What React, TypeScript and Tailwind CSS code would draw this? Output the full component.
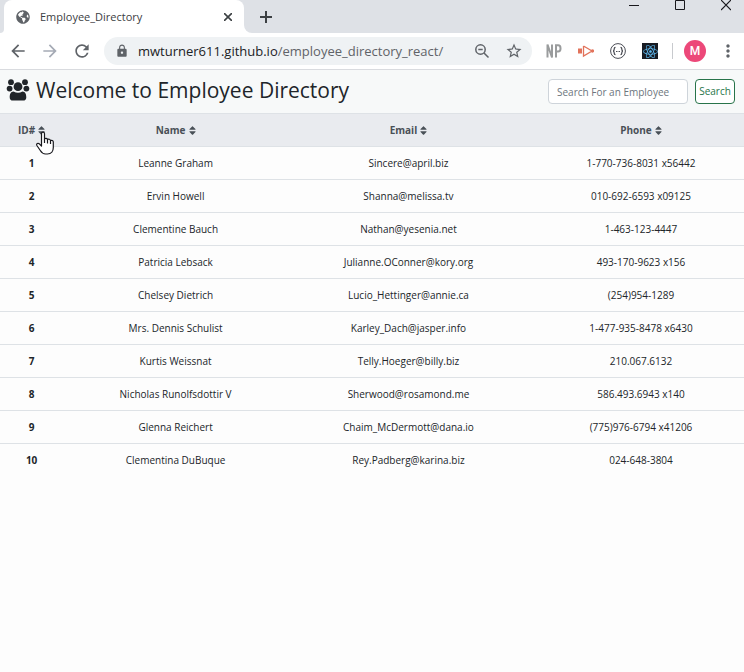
import { FaSort, FaReact, FaGlobeAmericas } from "react-icons/fa";
import { MdLock, MdStarBorder, MdRefresh, MdArrowBack, MdArrowForward, MdMoreVert } from "react-icons/md";

const employees = [
  ["Leanne Graham", "Sincere@april.biz", "1-770-736-8031 x56442"],
  ["Ervin Howell", "Shanna@melissa.tv", "010-692-6593 x09125"],
  ["Clementine Bauch", "Nathan@yesenia.net", "1-463-123-4447"],
  ["Patricia Lebsack", "Julianne.OConner@kory.org", "493-170-9623 x156"],
  ["Chelsey Dietrich", "Lucio_Hettinger@annie.ca", "(254)954-1289"],
  ["Mrs. Dennis Schulist", "Karley_Dach@jasper.info", "1-477-935-8478 x6430"],
  ["Kurtis Weissnat", "Telly.Hoeger@billy.biz", "210.067.6132"],
  ["Nicholas Runolfsdottir V", "Sherwood@rosamond.me", "586.493.6943 x140"],
  ["Glenna Reichert", "Chaim_McDermott@dana.io", "(775)976-6794 x41206"],
  ["Clementina DuBuque", "Rey.Padberg@karina.biz", "024-648-3804"],
];

function UsersIcon() {
  return (
    <svg className="h-[22px] w-6 shrink-0" viewBox="0 0 24 22" fill="#212529" aria-hidden="true">
      <circle cx="5" cy="3.200" r="2.900" />
      <circle cx="19" cy="3.200" r="2.900" />
      <circle cx="3.600" cy="9.600" r="2.900" />
      <circle cx="20.400" cy="9.600" r="2.900" />
      <circle cx="12" cy="7.700" r="4.400" />
      <path d="M7.500 12.400C10.500 14.200 13.500 14.200 16.500 12.400C19.200 12.600 20.300 15 20.300 18.200C20.300 20.600 19.200 21.600 17 21.600H7C4.800 21.600 3.700 20.600 3.700 18.200C3.700 15 4.800 12.600 7.500 12.400Z" />
    </svg>
  );
}

function PointerIcon() {
  return (
    <svg className="pointer-events-none absolute left-9 top-[18px] h-6 w-[18px]" viewBox="0 0 18 24" aria-hidden="true">
      <path
        d="M5.500 14V2.800C5.500.5 8.500.5 8.500 2.800V8C9.300 7 11.300 7.300 11.500 8.600C12.500 7.700 14.300 8.200 14.500 9.600C15.700 8.900 17.300 9.500 17.300 11V16.500C17.300 20 15.300 23 11.500 23H9.500C7 23 5.500 21.500 4.300 19.500L.9 14.500C0 12.800 2 11.700 3.300 12.800L5.500 15Z"
        fill="#fff" stroke="#18181d" strokeWidth="1.200" strokeLinejoin="round"
      />
      <path d="M8.500 8V12M11.500 8.600V12.500M14.500 9.600V13" stroke="#18181d" strokeWidth="1.200" />
    </svg>
  );
}

function TabBar() {
  return (
    <header className="flex h-[33px] bg-[#dee1e6] text-[#3c4043]">
      <div className="flex w-1 bg-white"><span className="w-full rounded-br-lg bg-[#dee1e6]" /></div>
      <div className="flex w-60 items-center rounded-t-lg bg-white pl-3 pr-2">
        <FaGlobeAmericas className="size-[14px] text-[#5f6368]" />
        <span className="ml-[10px] flex-1 text-[11px] leading-4">Employee_Directory</span>
        <button aria-label="Close tab" className="p-1">
          <svg className="size-2" viewBox="0 0 8 8"><path d="M0 0L8 8M8 0L0 8" stroke="currentColor" strokeWidth="1.600" /></svg>
        </button>
      </div>
      <div className="flex w-2 bg-white"><span className="w-full rounded-bl-lg bg-[#dee1e6]" /></div>
      <button aria-label="New tab" className="px-2">
        <svg className="size-3" viewBox="0 0 12 12"><path d="M6 0V12M0 6H12" stroke="currentColor" strokeWidth="2" /></svg>
      </button>
      <div className="ml-auto flex items-start gap-9 pr-[13px] text-[#18181d]">
        <button aria-label="Minimize">
          <svg className="h-3 w-[10px]" viewBox="0 0 10 12"><path d="M0 5.500H10" stroke="currentColor" /></svg>
        </button>
        <button aria-label="Maximize">
          <svg className="h-3 w-[10px]" viewBox="0 0 10 12"><path d="M.5.500H9.500V9.500H.5Z" fill="none" stroke="currentColor" /></svg>
        </button>
        <button aria-label="Close window">
          <svg className="h-3 w-[10px]" viewBox="0 0 10 12"><path d="M0 0L10 10M10 0L0 10" stroke="currentColor" strokeWidth="1.200" /></svg>
        </button>
      </div>
    </header>
  );
}

function Toolbar() {
  return (
    <nav aria-label="Browser" className="flex h-[37px] items-center border-b border-[#d9dbdf] bg-white pl-2 pr-[6px] text-[#5f6368]">
      <button aria-label="Back"><MdArrowBack className="size-5" /></button>
      <button aria-label="Forward" className="ml-3 text-[#a5aab5]"><MdArrowForward className="size-5" /></button>
      <button aria-label="Reload" className="ml-3"><MdRefresh className="size-5" /></button>
      <div className="ml-3 flex h-7 min-w-0 flex-1 items-center rounded-full bg-[#eff2f4] pl-[11px] pr-[9px]">
        <MdLock className="size-[14px] shrink-0" />
        <p className="ml-[9px] flex-1 whitespace-nowrap text-[13px] leading-5">
          <span className="text-[#202124]">mwturner611.github.io</span>/employee_directory_react/
        </p>
        <button aria-label="Zoom" className="shrink-0">
          <svg className="size-4" viewBox="0 0 16 16" fill="none" stroke="currentColor" strokeWidth="1.500">
            <circle cx="6.500" cy="6.500" r="4.700" /><path d="M10 10L14.500 14.500M4.300 6.500H8.700" />
          </svg>
        </button>
        <button aria-label="Bookmark" className="ml-[15px] shrink-0"><MdStarBorder className="size-[18px]" /></button>
      </div>
      <div className="ml-[14px] flex shrink-0 items-center">
        <button aria-label="NP" className="text-[#9a9c9d]">
          <svg className="size-4" viewBox="0 0 16 16" fill="none" stroke="currentColor" strokeWidth="2">
            <path d="M1.500 14.500V1.500L6 14.500V1.500M10 14.500V2.300H12.200C15.300 2.300 15.300 8.500 12.200 8.500H10" />
          </svg>
        </button>
        <button aria-label="Recorder" className="ml-4">
          <svg className="size-4" viewBox="0 0 16 16" fill="none" stroke="#e2735b" strokeWidth="1.300">
            <path d="M5.500 3L14 8L5.500 13V3" /><path d="M0 5.500H4V10.500H0Z" fill="#e2735b" stroke="none" /><circle cx="14.500" cy="8" r="1" fill="#e2735b" />
          </svg>
        </button>
        <button aria-label="JSON viewer" className="ml-4">
          <svg className="size-4" viewBox="0 0 16 16" fill="none" stroke="#4b4d55">
            <circle cx="8" cy="8" r="7.400" />
            <path d="M5.500 4.300Q4.200 4.300 4.200 6Q4.200 8 3 8Q4.200 8 4.200 10Q4.200 11.700 5.500 11.700M10.500 4.300Q11.800 4.300 11.800 6Q11.800 8 13 8Q11.800 8 11.800 10Q11.800 11.700 10.500 11.700" strokeWidth="1.300" />
            <path d="M6 8.500H10" strokeDasharray="1 .5" />
          </svg>
        </button>
        <button aria-label="React tools" className="ml-4 flex size-4 items-center justify-center bg-[#181c23] text-[#61bdf5]"><FaReact className="size-[15px]" /></button>
        <span className="ml-[14px] h-4 w-px bg-[#c8cace]" />
        <button className="ml-[11px] size-[22px] rounded-full bg-[#ec4879] font-['Roboto',sans-serif] text-[12px] font-medium leading-[22px] text-white">M</button>
        <button aria-label="Menu" className="ml-3"><MdMoreVert className="size-5" /></button>
      </div>
    </nav>
  );
}

function SortHeader({ label, className }: { label: string; className: string }) {
  return (
    <th scope="col" className={className}>
      <button className="inline-flex items-center gap-px pl-[2px] font-bold">{label}<FaSort className="size-[11px]" /></button>
    </th>
  );
}

export default function App() {
  return (
    <div className="min-h-screen bg-[#fdfdfd] font-['Open_Sans','Noto_Sans',sans-serif] text-[#212529]">
      <TabBar />
      <Toolbar />
      <main>
        <div className="flex h-[43px] items-center bg-[#f7f9f9] pl-[6px] pr-[9px]">
          <div className="flex flex-1 items-center gap-[6px] pb-1">
            <UsersIcon />
            <h1 className="whitespace-nowrap text-[21px] font-medium leading-7">Welcome to Employee Directory</h1>
          </div>
          <form className="flex gap-[7px] text-[10px]" onSubmit={(e) => e.preventDefault()}>
            <input aria-label="Search For an Employee" placeholder="Search For an Employee" className="h-[25px] w-[140px] rounded-sm border border-[#ced4da] bg-white px-2 placeholder:text-[#6c757d]" />
            <button type="submit" className="h-[25px] w-10 rounded-sm border border-[#28744a] bg-white text-center text-[#28744a]">Search</button>
          </form>
        </div>
        <div className="relative">
          <table className="w-full table-fixed border-collapse text-center text-[10px] leading-4">
            <thead className="bg-[#e9ebef] text-[#495057]">
              <tr className="h-[33px] border-t border-[#dee2e6]">
                <SortHeader label="ID#" className="w-[8.5%]" />
                <SortHeader label="Name" className="w-[30.2%]" />
                <SortHeader label="Email" className="w-[32.4%]" />
                <SortHeader label="Phone" className="pl-[9px]" />
              </tr>
            </thead>
            <tbody>
              {employees.map(([name, email, phone], i) => (
                <tr key={email} className="h-[33px] border-t border-[#dee2e6]">
                  <th scope="row" className="font-bold">{i + 1}</th>
                  <td>{name}</td>
                  <td>{email}</td>
                  <td className="pl-[9px]">{phone}</td>
                </tr>
              ))}
            </tbody>
          </table>
          <PointerIcon />
        </div>
      </main>
    </div>
  );
}
